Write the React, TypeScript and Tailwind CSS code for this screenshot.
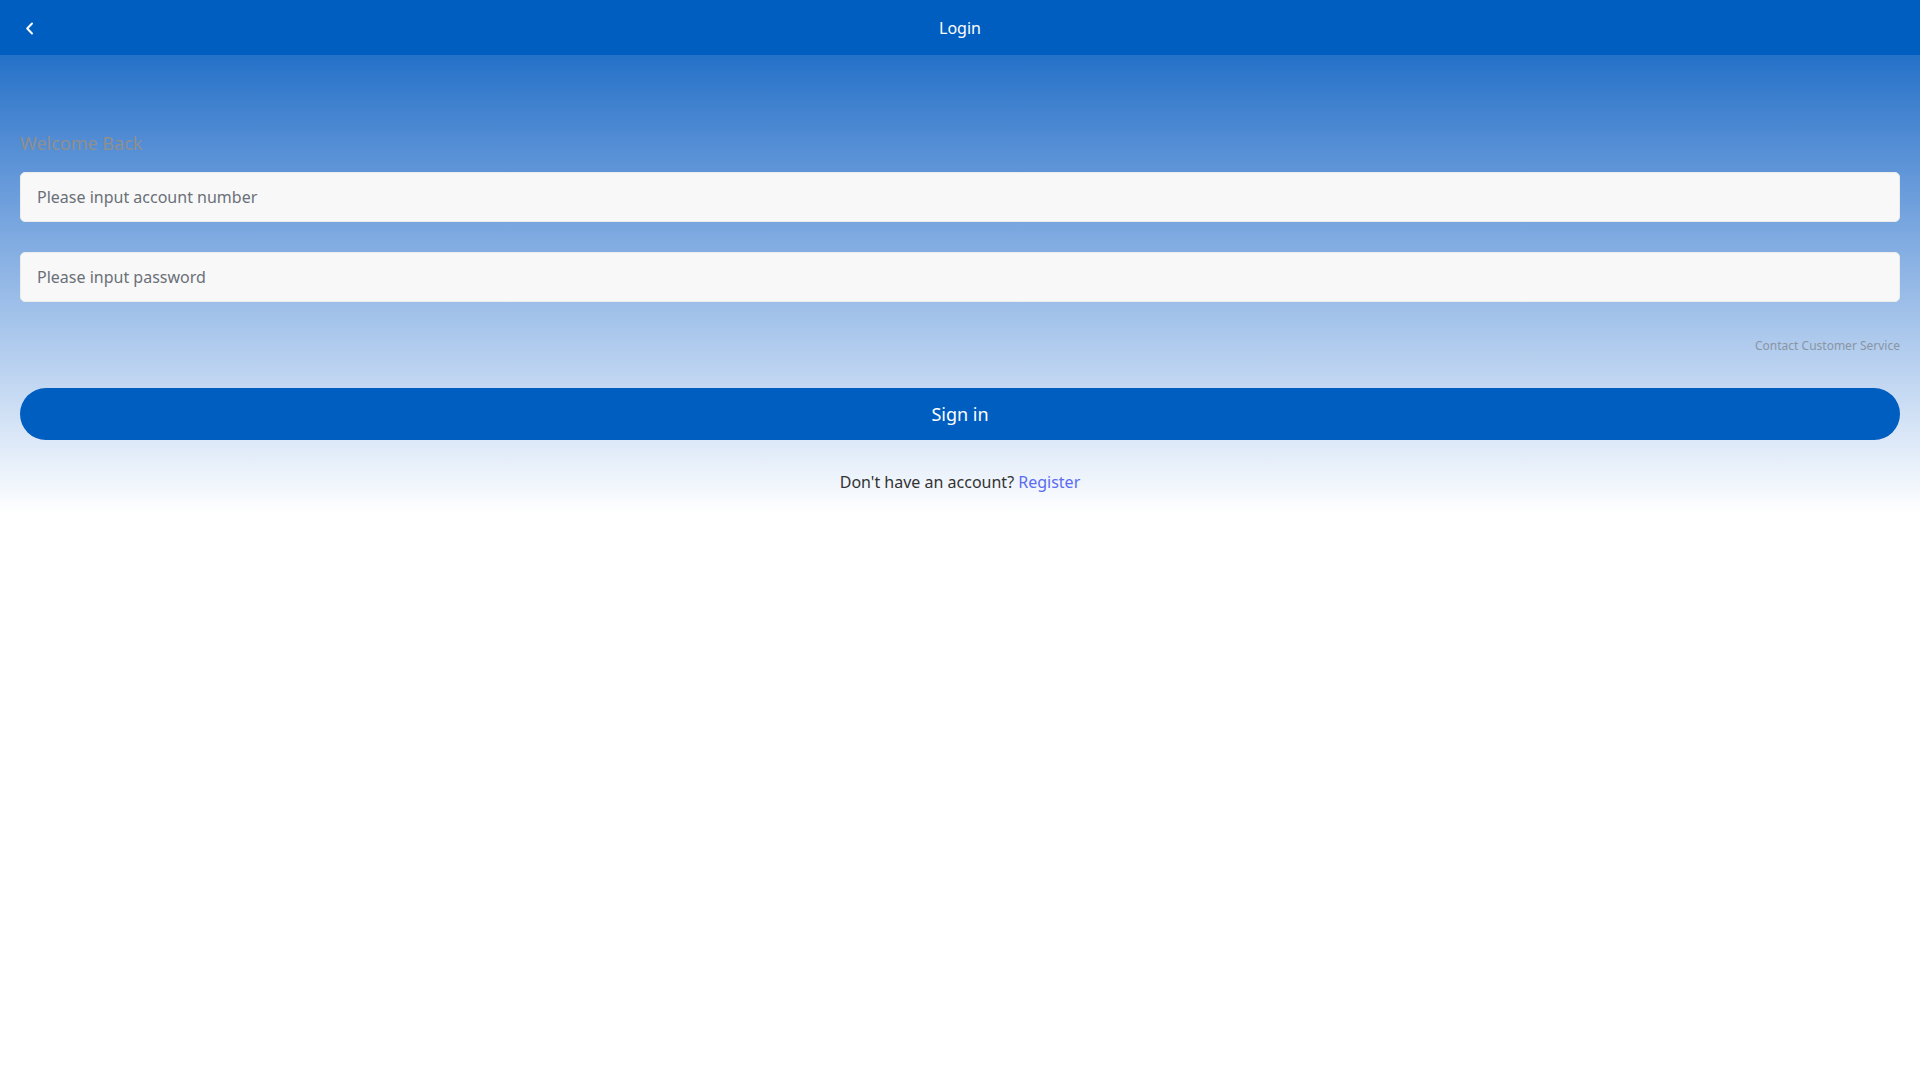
import React from "react";

export default function App() {
  return (
    <div className="min-h-screen bg-white" style={{ fontFamily: '"Noto Sans", "Open Sans", sans-serif' }}>
      <header className="relative flex h-[55px] items-center justify-center bg-[#005ec0]">
        <button className="absolute left-[20px] top-[16px] flex h-[24px] w-[18px] items-center justify-center">
          <svg width="9" height="13" viewBox="0 0 9 13" fill="none">
            <path d="M7 1.5L2.2 6.5L7 11.5" stroke="white" strokeWidth="2" strokeLinecap="round" strokeLinejoin="round" />
          </svg>
        </button>
        <h1 className="text-[16px] leading-[24px] text-white">Login</h1>
      </header>
      <div className="flex flex-col bg-gradient-to-b from-[#2371c8] to-white px-[20px] pb-[20px] pt-[75px]">
        <div className="text-[18px] leading-[26px] text-[#8f8f8f]">Welcome Back</div>
        <input
          className="mt-[16px] h-[50px] w-full rounded-[5px] border border-[#ececec] bg-[#f8f8f8] px-[16px] text-[16px] text-[#333] outline-none placeholder:text-[#6b7078]"
          placeholder="Please input account number"
        />
        <input
          type="password"
          className="mt-[30px] h-[50px] w-full rounded-[5px] border border-[#ececec] bg-[#f8f8f8] px-[16px] text-[16px] text-[#333] outline-none placeholder:text-[#6b7078]"
          placeholder="Please input password"
        />
        <div className="mt-[34px] flex justify-end">
          <span className="text-[12px] leading-[20px] text-[#8a95a3]">Contact Customer Service</span>
        </div>
        <button className="mt-[32px] flex h-[52px] w-full items-center justify-center rounded-full bg-[#005ec0] text-[18px] text-white">
          Sign in
        </button>
        <div className="mt-[30px] text-center text-[16px] leading-[24px] text-[#333333]">
          Don't have an account? <span className="text-[#5a6cf2]">Register</span>
        </div>
      </div>
    </div>
  );
}
